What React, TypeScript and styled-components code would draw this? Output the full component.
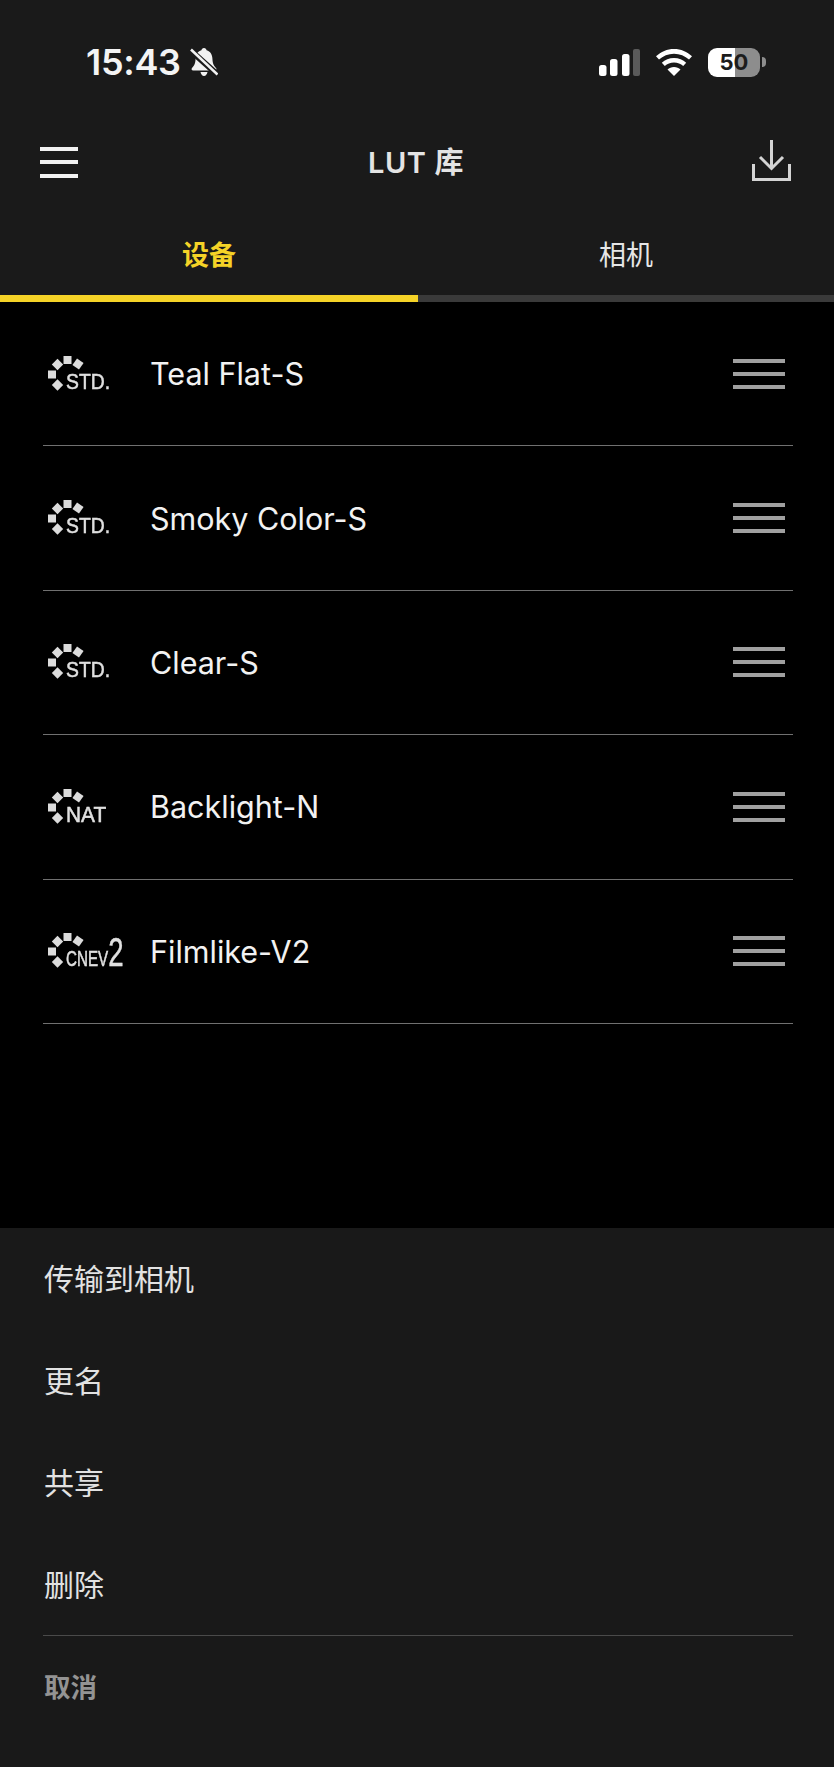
import React from "react";
import styled, { createGlobalStyle } from "styled-components";

const GlobalStyle = createGlobalStyle`
  html, body {
    margin: 0;
    padding: 0;
    background: #000;
  }
`;

const Page = styled.div`
  width: 834px;
  height: 1767px;
  display: flex;
  flex-direction: column;
  background: #000;
  font-family: Inter, "Noto Sans CJK SC", sans-serif;
  overflow: hidden;
`;

const TopArea = styled.header`
  background: #1a1a1a;
`;

const StatusBar = styled.div`
  height: 124px;
  box-sizing: border-box;
  padding: 0 68px 0 86px;
  display: flex;
  align-items: center;
  justify-content: space-between;
`;

const StatusLeft = styled.div`
  display: flex;
  align-items: center;
  gap: 9px;
`;

const Time = styled.span`
  color: #f4f4f4;
  font-size: 36px;
  font-weight: 600;
  letter-spacing: -0.3px;
`;

const StatusRight = styled.div`
  display: flex;
  align-items: center;
  gap: 16px;
`;

const Battery = styled.div`
  position: relative;
  width: 52px;
  height: 29px;
  border-radius: 9px;
  overflow: hidden;
  background: linear-gradient(90deg, #fff 0 27px, #8d8d8d 27px 100%);
  display: flex;
  align-items: center;
  justify-content: center;
  color: #1c1c1c;
  font-size: 22px;
  font-weight: 700;
`;

const BatteryWrap = styled.div`
  display: flex;
  align-items: center;
  gap: 2px;
`;

const BatteryNub = styled.div`
  width: 4px;
  height: 10px;
  border-radius: 0 4px 4px 0;
  background: #8d8d8d;
`;

const NavBar = styled.div`
  height: 76px;
  box-sizing: border-box;
  padding: 0 43px 0 40px;
  display: flex;
  align-items: center;
  justify-content: space-between;
`;

const Title = styled.h1`
  margin: 0 0 5px 2px;
  color: #e4e4e4;
  font-size: 29px;
  font-weight: 600;
  letter-spacing: 0.6px;
`;

const Burger = styled.div`
  width: 38px;
  display: flex;
  flex-direction: column;
  gap: 9.5px;
`;

const BurgerLine = styled.div`
  height: 4px;
  background: #f2f2f2;
`;

const DownloadWrap = styled.div`
  display: flex;
  margin-bottom: 3px;
`;

const Tabs = styled.nav`
  display: flex;
`;

const Tab = styled.div<{ $active?: boolean }>`
  flex: ${(p) => (p.$active ? "0 0 418px" : "1")};
  height: 102px;
  box-sizing: border-box;
  padding-top: 12px;
  display: flex;
  align-items: center;
  justify-content: center;
  font-size: 27px;
  font-weight: ${(p) => (p.$active ? 700 : 400)};
  color: ${(p) => (p.$active ? "#f5d327" : "#e6e6e6")};
  border-bottom: 7px solid ${(p) => (p.$active ? "#f5d327" : "#3a3a3a")};
`;

const List = styled.main`
  flex: 1;
  background: #000;
  display: flex;
  flex-direction: column;
`;

const Row = styled.div`
  height: 144.4px;
  margin: 0 41px 0 43px;
  box-sizing: border-box;
  border-bottom: 1px solid #707070;
  display: flex;
  align-items: center;
`;

const LogoSvg = styled.svg`
  width: 90px;
  height: 40px;
  margin-left: 5px;
  margin-right: 12px;
  flex: none;
  overflow: visible;
  filter: blur(0.5px);
`;

const LutName = styled.span`
  flex: 1;
  color: #f2f2f2;
  font-size: 30.5px;
  font-weight: 400;
`;

const Handle = styled.div`
  width: 52px;
  margin-right: 8px;
  display: flex;
  flex-direction: column;
  gap: 9px;
`;

const HandleLine = styled.div`
  height: 4px;
  background: #a0a0a0;
`;

const Sheet = styled.section`
  background: #191919;
  height: 539px;
  flex: none;
`;

const SheetItem = styled.div<{ $muted?: boolean }>`
  height: 102px;
  box-sizing: border-box;
  padding: 0 0 4px 44px;
  display: flex;
  align-items: center;
  font-size: ${(p) => (p.$muted ? 26.5 : 30)}px;
  font-weight: ${(p) => (p.$muted ? 700 : 400)};
  color: ${(p) => (p.$muted ? "#939393" : "#e2e2e2")};
`;

const SheetRule = styled.div`
  height: 1px;
  margin: -1px 41px 0 43px;
  background: #4a4a4a;
`;

// sunburst blocks of the picture-profile logo
const PETALS = [
  { x: 19.5, y: 6, r: 0 },
  { x: 30, y: 10, r: 35 },
  { x: 9.5, y: 10.5, r: -45 },
  { x: 4, y: 20.5, r: 0 },
  { x: 9.5, y: 31, r: 45 },
];

const Logo = ({ label, scale, big }: { label: string; scale: number; big?: boolean }) => (
  <LogoSvg viewBox="0 0 90 40">
    {PETALS.map((petal) => (
      <rect
        key={petal.x + petal.y}
        x={-4}
        y={-4}
        width={8}
        height={8}
        fill="#dcdcdc"
        transform={`translate(${petal.x} ${petal.y}) rotate(${petal.r})`}
      />
    ))}
    <text
      transform={`translate(18 35) scale(${scale} 1)`}
      fontFamily="Liberation Sans, sans-serif"
      fontSize={22}
      fill="#e0e0e0"
      stroke="#e0e0e0"
      strokeWidth={0.5}
    >
      {label}
      {big && <tspan fontSize={40}>2</tspan>}
    </text>
  </LogoSvg>
);

const BellOff = () => (
  <svg width="28" height="30" viewBox="0 0 28 30">
    <path
      d="M14 1c-1.500 0-2.400 1-2.600 2.300C7.600 4.400 5.800 7.600 5.600 11.500c-.2 4.500-1 6.700-3.600 9.500-.9 1-.3 2.500 1.100 2.500h21.800c1.400 0 2-1.500 1.100-2.500-2.600-2.800-3.400-5-3.600-9.500-.2-3.900-2-7.100-5.800-8.200C16.400 2 15.500 1 14 1zM10.500 25c.4 2.300 1.700 4 3.500 4s3.100-1.700 3.500-4z"
      fill="#f2f2f2"
    />
    <path d="M0 3l28 25" stroke="#1a1a1a" strokeWidth="6" />
    <path d="M1 2.500l26.500 25" stroke="#f2f2f2" strokeWidth="2.600" />
  </svg>
);

const Signal = () => (
  <svg width="41" height="27" viewBox="0 0 41 27">
    <rect x="0" y="16" width="7.500" height="11" rx="2.500" fill="#fff" />
    <rect x="11" y="10" width="7.500" height="17" rx="2.500" fill="#fff" />
    <rect x="23" y="5" width="7.500" height="22" rx="2.500" fill="#fff" />
    <rect x="34" y="0" width="7" height="27" rx="2" fill="#5a5a5a" />
  </svg>
);

const Wifi = () => (
  <svg width="36" height="27" viewBox="0 0 36 27">
    <path d="M18 0C11 0 5 2.700 0 7.300l3 3.300C7 7 12.200 4.700 18 4.700S29 7 33 10.600l3-3.300C31 2.700 25 0 18 0z" fill="#fff" />
    <path d="M18 9c-4.700 0-9 1.800-12.200 4.800l3 3.300c2.400-2.300 5.600-3.500 9.200-3.500s6.800 1.200 9.200 3.500l3-3.300C27 10.800 22.700 9 18 9z" fill="#fff" />
    <path d="M18 18c-2.600 0-4.800.9-6.500 2.400L18 27l6.500-6.600C22.800 18.900 20.600 18 18 18z" fill="#fff" />
  </svg>
);

const DownloadIcon = () => (
  <svg width="39" height="41" viewBox="0 0 39 41" fill="none" stroke="#d4d4d4" strokeWidth="3">
    <path d="M19.500 0v28" />
    <path d="M8 17l11.500 11.500L31 17" />
    <path d="M1.500 24v15.500h36V24" />
  </svg>
);

const LUTS = [
  { name: "Teal Flat-S", label: "STD.", scale: 0.88 },
  { name: "Smoky Color-S", label: "STD.", scale: 0.88 },
  { name: "Clear-S", label: "STD.", scale: 0.88 },
  { name: "Backlight-N", label: "NAT", scale: 0.95 },
  { name: "Filmlike-V2", label: "CNEV", scale: 0.69, big: true },
];

export default function App() {
  return (
    <Page>
      <GlobalStyle />
      <TopArea>
        <StatusBar>
          <StatusLeft>
            <Time>15:43</Time>
            <BellOff />
          </StatusLeft>
          <StatusRight>
            <Signal />
            <Wifi />
            <BatteryWrap>
              <Battery>50</Battery>
              <BatteryNub />
            </BatteryWrap>
          </StatusRight>
        </StatusBar>
        <NavBar>
          <Burger>
            <BurgerLine />
            <BurgerLine />
            <BurgerLine />
          </Burger>
          <Title>LUT 库</Title>
          <DownloadWrap>
            <DownloadIcon />
          </DownloadWrap>
        </NavBar>
        <Tabs>
          <Tab $active>设备</Tab>
          <Tab>相机</Tab>
        </Tabs>
      </TopArea>
      <List>
        {LUTS.map((lut) => (
          <Row key={lut.name}>
            <Logo label={lut.label} scale={lut.scale} big={lut.big} />
            <LutName>{lut.name}</LutName>
            <Handle>
              <HandleLine />
              <HandleLine />
              <HandleLine />
            </Handle>
          </Row>
        ))}
      </List>
      <Sheet>
        <SheetItem>传输到相机</SheetItem>
        <SheetItem>更名</SheetItem>
        <SheetItem>共享</SheetItem>
        <SheetItem>删除</SheetItem>
        <SheetRule />
        <SheetItem $muted>取消</SheetItem>
      </Sheet>
    </Page>
  );
}
